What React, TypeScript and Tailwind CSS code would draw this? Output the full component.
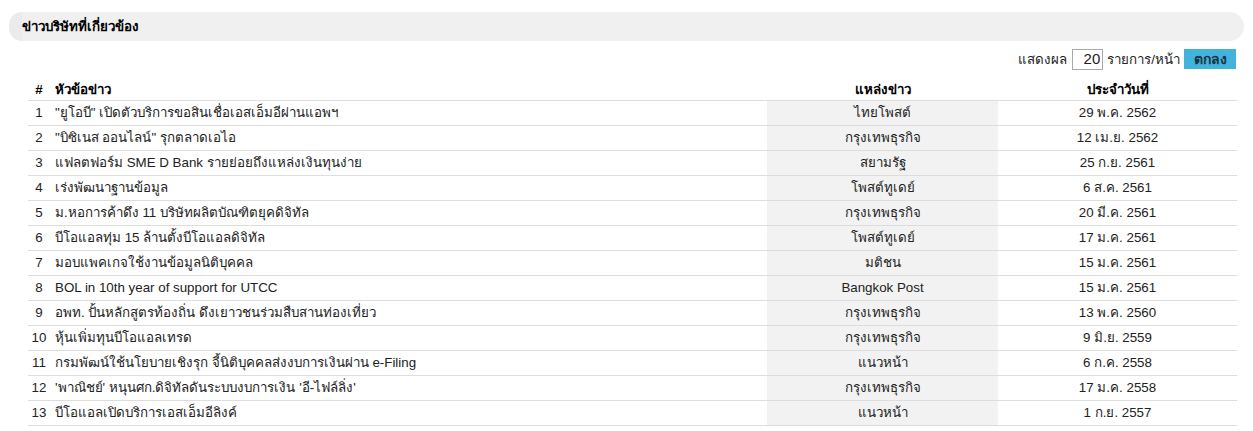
const news = [
  { title: '"ยูโอบี" เปิดตัวบริการขอสินเชื่อเอสเอ็มอีผ่านแอพฯ', source: 'ไทยโพสต์', date: '29 พ.ค. 2562' },
  { title: '"บิซิเนส ออนไลน์" รุกตลาดเอไอ', source: 'กรุงเทพธุรกิจ', date: '12 เม.ย. 2562' },
  { title: 'แฟลตฟอร์ม SME D Bank รายย่อยถึงแหล่งเงินทุนง่าย', source: 'สยามรัฐ', date: '25 ก.ย. 2561' },
  { title: 'เร่งพัฒนาฐานข้อมูล', source: 'โพสต์ทูเดย์', date: '6 ส.ค. 2561' },
  { title: 'ม.หอการค้าดึง 11 บริษัทผลิตบัณฑิตยุคดิจิทัล', source: 'กรุงเทพธุรกิจ', date: '20 มี.ค. 2561' },
  { title: 'บีโอแอลทุ่ม 15 ล้านตั้งบีโอแอลดิจิทัล', source: 'โพสต์ทูเดย์', date: '17 ม.ค. 2561' },
  { title: 'มอบแพคเกจใช้งานข้อมูลนิติบุคคล', source: 'มติชน', date: '15 ม.ค. 2561' },
  { title: 'BOL in 10th year of support for UTCC', source: 'Bangkok Post', date: '15 ม.ค. 2561' },
  { title: 'อพท. ปั้นหลักสูตรท้องถิ่น ดึงเยาวชนร่วมสืบสานท่องเที่ยว', source: 'กรุงเทพธุรกิจ', date: '13 พ.ค. 2560' },
  { title: 'หุ้นเพิ่มทุนบีโอแอลเทรด', source: 'กรุงเทพธุรกิจ', date: '9 มิ.ย. 2559' },
  { title: 'กรมพัฒน์ใช้นโยบายเชิงรุก จี้นิติบุคคลส่งงบการเงินผ่าน e-Filing', source: 'แนวหน้า', date: '6 ก.ค. 2558' },
  { title: "'พาณิชย์' หนุนศก.ดิจิทัลดันระบบงบการเงิน 'อี-ไฟล์ลิ่ง'", source: 'กรุงเทพธุรกิจ', date: '17 ม.ค. 2558' },
  { title: 'บีโอแอลเปิดบริการเอสเอ็มอีลิงค์', source: 'แนวหน้า', date: '1 ก.ย. 2557' },
]

export default function App() {
  return (
    <div className="w-[1253px] h-[431px] overflow-hidden bg-white text-[13.33px] text-[#222] font-['Liberation_Sans',Tahoma,sans-serif] pt-3">
      <div className="mx-[9px] flex h-[29px]">
        <div className="w-[13px] rounded-l-full bg-[#ebebeb]" />
        <div className="flex-1 flex items-center rounded-r-full bg-[#f0f0f0] font-bold text-black">
          ข่าวบริษัทที่เกี่ยวข้อง
        </div>
      </div>

      <div className="flex items-center justify-end gap-1 mt-2 mr-[17px] h-[21px]">
        <span className="mr-[1px]">แสดงผล</span>
        <input
          defaultValue="20"
          className="w-[31px] h-[21px] border border-[#aaa] text-right pr-[2px] text-[15px] text-[#222] outline-none"
        />
        <span>รายการ/หน้า</span>
        <button className="self-start h-[20px] w-[52px] bg-[#41b3dc] font-bold text-[14px] text-[#1c3340]">
          ตกลง
        </button>
      </div>

      <table className="ml-[28px] mt-[11px] w-[1209px] border-collapse table-fixed">
        <colgroup>
          <col className="w-[22px]" />
          <col />
          <col className="w-[231px]" />
          <col className="w-[239px]" />
        </colgroup>
        <thead>
          <tr className="h-[19px] border-b border-[#ddd] text-black leading-[18px]">
            <th className="text-center font-bold">#</th>
            <th className="text-left pl-[5px] font-bold">หัวข้อข่าว</th>
            <th className="text-center font-bold">แหล่งข่าว</th>
            <th className="text-center font-bold">ประจำวันที่</th>
          </tr>
        </thead>
        <tbody>
          {news.map((n, i) => (
            <tr key={i} className="h-[25px] border-b border-[#ddd] leading-[18px]">
              <td className="text-center">{i + 1}</td>
              <td className="pl-[5px] whitespace-nowrap">{n.title}</td>
              <td className="text-center bg-[#f2f2f2]">{n.source}</td>
              <td className="text-center">{n.date}</td>
            </tr>
          ))}
        </tbody>
      </table>
    </div>
  )
}
